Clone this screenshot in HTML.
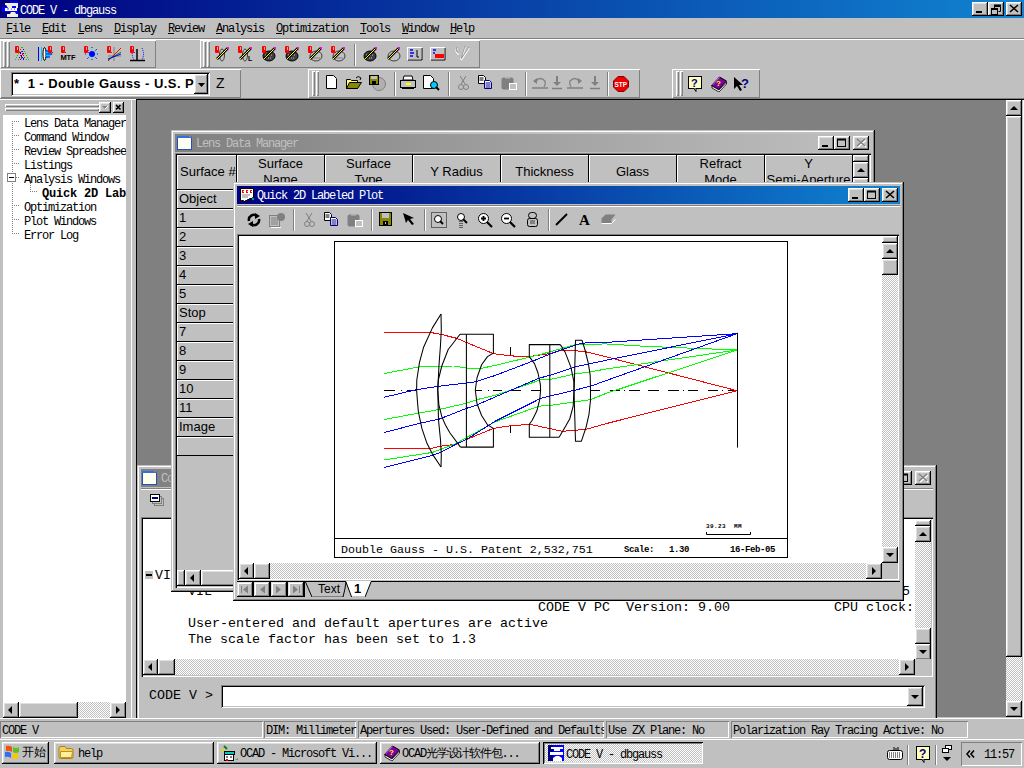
<!DOCTYPE html>
<html><head><meta charset="utf-8">
<style>
*{margin:0;padding:0;box-sizing:border-box}
html,body{width:1024px;height:768px;overflow:hidden;background:#c0c0c0;position:relative;color:#000}
body>div,body>svg{position:absolute}
.a{position:absolute}
.m{font-family:"Liberation Mono",monospace;font-size:12px;letter-spacing:-1.2px;white-space:pre;line-height:12px}
.c{font-family:"Liberation Mono",monospace;font-size:13.33px;white-space:pre;line-height:16px}
.s{font-family:"Liberation Sans",sans-serif;font-size:13px;white-space:pre;line-height:16px}
.btn{background:#c0c0c0;box-shadow:inset -1px -1px #000,inset 1px 1px #fff,inset -2px -2px #808080,inset 2px 2px #dfdfdf}
.btn2{background:#c0c0c0;box-shadow:inset -1px -1px #000,inset 1px 1px #dfdfdf,inset -2px -2px #808080,inset 2px 2px #fff}
.win{background:#c0c0c0;box-shadow:inset -1px -1px #000,inset 1px 1px #c0c0c0,inset -2px -2px #808080,inset 2px 2px #fff}
.sunk{box-shadow:inset 1px 1px #808080,inset -1px -1px #fff,inset 2px 2px #000,inset -2px -2px #c0c0c0}
.pane{box-shadow:inset 1px 1px #808080,inset -1px -1px #fff}
.etch{box-shadow:inset 1px 1px #fff,inset -1px -1px #808080}
.act{background:linear-gradient(to right,#000080,#1084d0)}
.inact{background:linear-gradient(to right,#808080,#c0c0c0)}
.dith{background:conic-gradient(#fff 25%,#c0c0c0 0 50%,#fff 0 75%,#c0c0c0 0) 0 0/2px 2px}
.hl{height:1px}
.vl{width:1px}

</style></head><body>
<!-- main title -->
<div class="act" style="left:0;top:0;width:1024px;height:18px"></div>
<svg style="left:2px;top:1px" width="16" height="16" viewBox="0 0 16 16">
<rect x="8" y="0" width="8" height="16" fill="#0000ff"/>
<rect x="0" y="6" width="16" height="5" fill="#0000ff"/>
<path d="M3 2h13v5h-2V5h-4v2H6L4 4H3z" fill="#f0f0d8"/>
<rect x="3" y="7" width="12" height="3" fill="#fff"/>
<path d="M5 8h2M9 8h1M12 8h1" stroke="#0000ff" stroke-width="0.8"/>
<path d="M9 11h4l1 2h2v3H5v-3h3z" fill="#f0f0d8"/>
</svg>
<div class="m" style="left:20px;top:5px;color:#fff">CODE V - dbgauss</div>
<div class="btn" style="left:972px;top:2px;width:16px;height:14px"></div>
<div style="left:976px;top:11px;width:6px;height:2px;background:#000"></div>
<div class="btn" style="left:988px;top:2px;width:16px;height:14px"></div>
<svg style="left:988px;top:2px" width="16" height="14"><path d="M6.5 4.5h6v5h-2M6.5 4.5v2" stroke="#000" fill="none"/><path d="M6 3.5h7" stroke="#000" stroke-width="2"/><rect x="3.5" y="7.5" width="6" height="5" stroke="#000" fill="none"/><path d="M3 7h7" stroke="#000" stroke-width="2"/></svg>
<div class="btn" style="left:1006px;top:2px;width:16px;height:14px"></div>
<svg style="left:1006px;top:2px" width="16" height="14"><path d="M4 3l8 7M12 3l-8 7" stroke="#000" stroke-width="1.6"/></svg>

<!-- menu -->
<div class="m" style="left:6px;top:23px">File  Edit  Lens  Display  Review  Analysis  Optimization  Tools  Window  Help</div>
<div class="hl" style="left:6px;top:33px;width:6px;background:#000"></div><div class="hl" style="left:42px;top:33px;width:6px;background:#000"></div><div class="hl" style="left:78px;top:33px;width:6px;background:#000"></div><div class="hl" style="left:114px;top:33px;width:6px;background:#000"></div><div class="hl" style="left:168px;top:33px;width:6px;background:#000"></div><div class="hl" style="left:216px;top:33px;width:6px;background:#000"></div><div class="hl" style="left:276px;top:33px;width:6px;background:#000"></div><div class="hl" style="left:360px;top:33px;width:6px;background:#000"></div><div class="hl" style="left:402px;top:33px;width:6px;background:#000"></div><div class="hl" style="left:450px;top:33px;width:6px;background:#000"></div>
<div class="hl" style="left:0;top:38px;width:1024px;background:#808080"></div>
<div class="hl" style="left:0;top:39px;width:1024px;background:#fff"></div>

<!-- toolbars -->
<div class="etch" style="left:0;top:40px;width:156px;height:28px"></div>
<div class="etch" style="left:200px;top:40px;width:280px;height:28px"></div>
<div class="etch" style="left:0;top:69px;width:241px;height:29px"></div>
<div class="etch" style="left:308px;top:69px;width:332px;height:29px"></div>
<div class="etch" style="left:640px;top:69px;width:0px;height:29px"></div>
<div class="etch" style="left:672px;top:69px;width:88px;height:29px"></div>
<div class="hl" style="left:0;top:98px;width:1024px;background:#808080"></div>

<!-- combo -->
<div class="sunk" style="left:11px;top:72px;width:199px;height:24px;background:#fff"></div>
<div class="s" style="left:14px;top:76px;font-size:13px;font-weight:bold;line-height:16px;letter-spacing:0.45px;width:180px;overflow:hidden">*  1 - Double Gauss - U.S. P</div>
<div class="btn" style="left:194px;top:74px;width:14px;height:20px"></div>
<svg style="left:194px;top:74px" width="14" height="20"><path d="M4 9h7l-3.5 4z" fill="#000"/></svg>
<div class="s" style="left:216px;top:75px;font-size:14px">Z</div>

<!-- left panel -->
<div class="hl" style="left:0;top:99px;width:136px;background:#fff"></div>
<div class="etch" style="left:5px;top:104px;width:94px;height:3px"></div>
<div class="etch" style="left:5px;top:108px;width:94px;height:3px"></div>
<div class="btn" style="left:99px;top:102px;width:12px;height:11px"></div>
<svg style="left:99px;top:102px" width="12" height="11"><path d="M3 4h6l-3 3z" fill="#808080"/><path d="M9 4l-3 3" stroke="#fff" stroke-width="1"/></svg>
<div class="btn" style="left:113px;top:102px;width:11px;height:11px"></div>
<svg style="left:113px;top:102px" width="11" height="11"><path d="M3 3l4.5 4.5M7.5 3L3 7.5" stroke="#000" stroke-width="1.6"/></svg>
<div style="left:3px;top:115px;width:123px;height:587px;background:#fff"></div>
<div class="vl" style="left:131px;top:99px;height:619px;background:#fff"></div>
<svg style="left:3px;top:115px" width="123" height="130">
<g fill="#808080">
<rect x="9" y="6" width="1" height="1"/>
</g>
<path d="M9.5 6v113" stroke="#808080" stroke-dasharray="1 1" />
<path d="M9 6.5h8M9 20.5h8M9 34.5h8M9 48.5h8M13 62.5h4M9 90.5h8M9 104.5h8M9 118.5h8M27 76.5h8" stroke="#808080" stroke-dasharray="1 1"/>
<path d="M27.5 66v10" stroke="#808080" stroke-dasharray="1 1"/>
<rect x="4.5" y="58.5" width="8" height="8" fill="#fff" stroke="#808080"/>
<path d="M6 62.5h5" stroke="#000"/>
</svg>
<div class="m" style="left:24px;top:117px;line-height:14px;width:102px;overflow:hidden">Lens Data Manager
Command Window
Review Spreadsheet
Listings
Analysis Windows

Optimization
Plot Windows
Error Log</div>
<div class="m" style="left:42px;top:188px;font-weight:bold;letter-spacing:-0.2px;width:84px;overflow:hidden">Quick 2D Labeled Plot</div>
<div style="left:126px;top:115px;width:5px;height:603px;background:#c0c0c0"></div>
<!-- tree hscroll -->
<div class="btn" style="left:3px;top:702px;width:16px;height:16px"></div>
<svg style="left:3px;top:702px" width="16" height="16"><path d="M9 4v8l-4-4z" fill="#000"/></svg>
<div class="btn" style="left:19px;top:702px;width:59px;height:16px"></div>
<div class="dith" style="left:78px;top:702px;width:33px;height:16px"></div>
<div class="btn" style="left:110px;top:702px;width:16px;height:16px"></div>
<svg style="left:110px;top:702px" width="16" height="16"><path d="M6 4v8l4-4z" fill="#000"/></svg>

<!-- MDI -->
<div style="left:136px;top:99px;width:888px;height:620px;background:#808080;box-shadow:inset 1px 1px #000,inset -1px -1px #fff,inset -2px -2px #c0c0c0"></div>
<!-- MDI vscroll -->
<div class="btn" style="left:1006px;top:100px;width:16px;height:16px"></div>
<svg style="left:1006px;top:100px" width="16" height="16"><path d="M4 10h8l-4-4z" fill="#000"/></svg>
<div class="btn" style="left:1006px;top:116px;width:16px;height:541px"></div>
<div class="dith" style="left:1006px;top:657px;width:16px;height:44px"></div>
<div class="btn" style="left:1006px;top:701px;width:16px;height:16px"></div>
<svg style="left:1006px;top:701px" width="16" height="16"><path d="M4 6h8l-4 4z" fill="#000"/></svg>

<div class="win" style="left:137px;top:465px;width:800px;height:262px"></div>
<div class="inact" style="left:141px;top:469px;width:792px;height:18px"></div>
<svg style="left:142px;top:471px" width="15" height="14"><rect x="0.5" y="0.5" width="14" height="13" fill="#fffff0" stroke="#2050c0"/><rect x="0" y="0" width="15" height="2" fill="#3070e0"/><rect x="12" y="0" width="2" height="1" fill="#ff6030"/></svg>
<div class="m" style="left:161px;top:473px;color:#c0c0c0">Command Window</div>
<div class="btn" style="left:880px;top:471px;width:16px;height:14px"></div>
<div class="btn" style="left:896px;top:471px;width:16px;height:14px"></div>
<div class="btn" style="left:915px;top:471px;width:16px;height:14px"></div>
<svg style="left:896px;top:471px" width="16" height="14"><rect x="3.5" y="3.5" width="8" height="7" fill="none" stroke="#000"/><path d="M3 3.5h9" stroke="#000" stroke-width="2"/></svg>
<svg style="left:915px;top:471px" width="16" height="14"><path d="M4 3l8 7M12 3l-8 7" stroke="#fff" stroke-width="1.6" transform="translate(1,1)"/><path d="M4 3l8 7M12 3l-8 7" stroke="#808080" stroke-width="1.6"/></svg>
<div class="hl" style="left:141px;top:488px;width:792px;background:#808080"></div>
<div class="hl" style="left:141px;top:489px;width:792px;background:#fff"></div>
<svg style="left:150px;top:494px" width="18" height="16">
<rect x="4.5" y="4.5" width="9" height="7" fill="#c0c0c0" stroke="#808080"/>
<rect x="2.5" y="2.5" width="9" height="7" fill="#c0c0c0" stroke="#808080"/>
<rect x="0.5" y="0.5" width="9" height="7" fill="#fff" stroke="#000"/>
<rect x="2" y="3" width="6" height="2" fill="#000080"/>
</svg>
<div style="left:141px;top:517px;width:792px;height:160px;background:#fff;box-shadow:inset 1px 1px #808080,inset 2px 2px #000,inset -1px -1px #fff,inset -2px -2px #c0c0c0"></div>
<div style="left:145px;top:571px;width:8px;height:8px;background:#c0c0c0"></div><div style="left:146px;top:574px;width:6px;height:2px;background:#000"></div>
<div class="c" style="left:155px;top:568px">VI</div>
<div class="c" style="left:188px;top:584px">VIL</div>
<div class="c" style="left:538px;top:600px">CODE V PC  Version: 9.00</div>
<div class="c" style="left:834px;top:600px">CPU clock:</div>
<div class="c" style="left:902px;top:584px">5</div>
<div class="c" style="left:188px;top:616px">User-entered and default apertures are active
The scale factor has been set to 1.3</div>
<div class="btn" style="left:915px;top:520px;width:16px;height:6px"></div>
<div class="dith" style="left:915px;top:526px;width:16px;height:133px"></div>
<div class="btn" style="left:915px;top:526px;width:16px;height:16px"></div>
<svg style="left:915px;top:526px" width="16" height="16"><path d="M4 10h8l-4-4z" fill="#000"/></svg>
<div class="btn" style="left:915px;top:628px;width:16px;height:16px"></div>
<div class="btn" style="left:915px;top:644px;width:16px;height:16px"></div>
<svg style="left:915px;top:644px" width="16" height="16"><path d="M4 6h8l-4 4z" fill="#000"/></svg>
<div class="dith" style="left:143px;top:659px;width:772px;height:16px"></div>
<div class="btn" style="left:143px;top:659px;width:15px;height:16px"></div>
<svg style="left:143px;top:659px" width="15" height="16"><path d="M9 4v8l-4-4z" fill="#000"/></svg>
<div class="btn" style="left:158px;top:659px;width:17px;height:16px"></div>
<div class="btn" style="left:899px;top:659px;width:16px;height:16px"></div>
<svg style="left:899px;top:659px" width="16" height="16"><path d="M6 4v8l4-4z" fill="#000"/></svg>
<div style="left:915px;top:659px;width:16px;height:16px;background:#c0c0c0"></div>
<div class="c" style="left:149px;top:688px">CODE V &gt;</div>
<div class="sunk" style="left:221px;top:685px;width:704px;height:23px;background:#fff"></div>
<div class="btn" style="left:907px;top:687px;width:16px;height:19px"></div>
<svg style="left:907px;top:687px" width="16" height="19"><path d="M4 8h8l-4 4z" fill="#000"/></svg>
<div class="win" style="left:171px;top:130px;width:704px;height:462px"></div>
<div class="inact" style="left:175px;top:134px;width:696px;height:18px"></div>
<svg style="left:177px;top:136px" width="15" height="14"><rect x="0.5" y="0.5" width="14" height="13" fill="#fffff0" stroke="#2050c0"/><rect x="0" y="0" width="15" height="2" fill="#3070e0"/><rect x="12" y="0" width="2" height="1" fill="#ff6030"/></svg>
<div class="m" style="left:196px;top:138px;color:#c0c0c0">Lens Data Manager</div>
<div class="btn" style="left:818px;top:136px;width:16px;height:14px"></div>
<div class="btn" style="left:834px;top:136px;width:16px;height:14px"></div>
<div class="btn" style="left:853px;top:136px;width:16px;height:14px"></div>
<div style="left:822px;top:145px;width:6px;height:2px;background:#000"></div>
<svg style="left:834px;top:136px" width="16" height="14"><rect x="3.5" y="3.5" width="8" height="7" fill="none" stroke="#000"/><path d="M3 3.5h9" stroke="#000" stroke-width="2"/></svg>
<svg style="left:853px;top:136px" width="16" height="14"><path d="M4 3l8 7M12 3l-8 7" stroke="#fff" stroke-width="1.6" transform="translate(1,1)"/><path d="M4 3l8 7M12 3l-8 7" stroke="#808080" stroke-width="1.6"/></svg>
<div style="left:175px;top:153px;width:696px;height:435px;background:#c0c0c0;box-shadow:inset 1px 1px #808080,inset 2px 2px #000,inset -1px -1px #fff"></div>
<div style="left:176px;top:154px;width:677px;height:302px;background:#000"></div><div style="left:176px;top:456px;width:1px;height:114px;background:#000"></div>
<div style="left:177px;top:155px;width:59px;height:34px;background:#c0c0c0;box-shadow:inset 1px 1px #fff"></div>
<div class="s" style="left:180px;top:164px;width:56px;overflow:hidden">Surface #</div>
<div style="left:237px;top:155px;width:87px;height:34px;background:#c0c0c0;box-shadow:inset 1px 1px #fff"></div>
<div class="s" style="left:237px;top:156px;width:87px;height:33px;overflow:hidden;text-align:center;line-height:16px">Surface
Name</div>
<div style="left:325px;top:155px;width:87px;height:34px;background:#c0c0c0;box-shadow:inset 1px 1px #fff"></div>
<div class="s" style="left:325px;top:156px;width:87px;height:33px;overflow:hidden;text-align:center;line-height:16px">Surface
Type</div>
<div style="left:413px;top:155px;width:87px;height:34px;background:#c0c0c0;box-shadow:inset 1px 1px #fff"></div>
<div class="s" style="left:413px;top:164px;width:87px;text-align:center">Y Radius</div>
<div style="left:501px;top:155px;width:87px;height:34px;background:#c0c0c0;box-shadow:inset 1px 1px #fff"></div>
<div class="s" style="left:501px;top:164px;width:87px;text-align:center">Thickness</div>
<div style="left:589px;top:155px;width:87px;height:34px;background:#c0c0c0;box-shadow:inset 1px 1px #fff"></div>
<div class="s" style="left:589px;top:164px;width:87px;text-align:center">Glass</div>
<div style="left:677px;top:155px;width:87px;height:34px;background:#c0c0c0;box-shadow:inset 1px 1px #fff"></div>
<div class="s" style="left:677px;top:156px;width:87px;height:33px;overflow:hidden;text-align:center;line-height:16px">Refract
Mode</div>
<div style="left:765px;top:155px;width:87px;height:34px;background:#c0c0c0;box-shadow:inset 1px 1px #fff"></div>
<div class="s" style="left:765px;top:156px;width:87px;height:33px;overflow:hidden;text-align:center;line-height:16px">Y
Semi-Aperture</div>
<div style="left:177px;top:190px;width:59px;height:18px;background:#c0c0c0;box-shadow:inset 1px 1px #fff"></div>
<div class="s" style="left:179px;top:191px">Object</div>
<div style="left:177px;top:209px;width:59px;height:18px;background:#c0c0c0;box-shadow:inset 1px 1px #fff"></div>
<div class="s" style="left:179px;top:210px">1</div>
<div style="left:177px;top:228px;width:59px;height:18px;background:#c0c0c0;box-shadow:inset 1px 1px #fff"></div>
<div class="s" style="left:179px;top:229px">2</div>
<div style="left:177px;top:247px;width:59px;height:18px;background:#c0c0c0;box-shadow:inset 1px 1px #fff"></div>
<div class="s" style="left:179px;top:248px">3</div>
<div style="left:177px;top:266px;width:59px;height:18px;background:#c0c0c0;box-shadow:inset 1px 1px #fff"></div>
<div class="s" style="left:179px;top:267px">4</div>
<div style="left:177px;top:285px;width:59px;height:18px;background:#c0c0c0;box-shadow:inset 1px 1px #fff"></div>
<div class="s" style="left:179px;top:286px">5</div>
<div style="left:177px;top:304px;width:59px;height:18px;background:#c0c0c0;box-shadow:inset 1px 1px #fff"></div>
<div class="s" style="left:179px;top:305px">Stop</div>
<div style="left:177px;top:323px;width:59px;height:18px;background:#c0c0c0;box-shadow:inset 1px 1px #fff"></div>
<div class="s" style="left:179px;top:324px">7</div>
<div style="left:177px;top:342px;width:59px;height:18px;background:#c0c0c0;box-shadow:inset 1px 1px #fff"></div>
<div class="s" style="left:179px;top:343px">8</div>
<div style="left:177px;top:361px;width:59px;height:18px;background:#c0c0c0;box-shadow:inset 1px 1px #fff"></div>
<div class="s" style="left:179px;top:362px">9</div>
<div style="left:177px;top:380px;width:59px;height:18px;background:#c0c0c0;box-shadow:inset 1px 1px #fff"></div>
<div class="s" style="left:179px;top:381px">10</div>
<div style="left:177px;top:399px;width:59px;height:18px;background:#c0c0c0;box-shadow:inset 1px 1px #fff"></div>
<div class="s" style="left:179px;top:400px">11</div>
<div style="left:177px;top:418px;width:59px;height:18px;background:#c0c0c0;box-shadow:inset 1px 1px #fff"></div>
<div class="s" style="left:179px;top:419px">Image</div>
<div style="left:177px;top:437px;width:59px;height:18px;background:#c0c0c0;box-shadow:inset 1px 1px #fff"></div>

<div class="btn" style="left:853px;top:155px;width:16px;height:7px"></div>
<div class="btn" style="left:853px;top:162px;width:16px;height:16px"></div>
<svg style="left:853px;top:162px" width="16" height="16"><path d="M4 10h8l-4-4z" fill="#000"/></svg>
<div class="btn" style="left:853px;top:178px;width:16px;height:392px"></div>
<div style="left:177px;top:570px;width:692px;height:16px;background:#c0c0c0"></div>
<div class="btn" style="left:177px;top:570px;width:8px;height:16px"></div>
<div class="btn" style="left:185px;top:570px;width:16px;height:16px"></div>
<svg style="left:185px;top:570px" width="16" height="16"><path d="M9 4v8l-4-4z" fill="#000"/></svg>
<div class="btn" style="left:201px;top:570px;width:40px;height:16px"></div>
<div class="win" style="left:233px;top:182px;width:671px;height:419px"></div>
<div class="act" style="left:237px;top:186px;width:663px;height:18px"></div>
<svg style="left:239px;top:187px" width="16" height="16" viewBox="0 0 16 16">
<path d="M1.5 1.5h13v9h-1v1h-3v1h-2v1h-2v1h-2v-1h-2v1h-1z" fill="#fff" stroke="#000"/>
<path d="M3 3h2v3H3zM7 3h2v3H7zM11 3h2v3h-2z" fill="#ff0000"/>
<path d="M4 4h0.8v1H4zM8 4h0.8v1H8zM12 4h1v1h-1z" fill="#fff"/>
<path d="M3 8h8M3 10h6" stroke="#808080"/>
<rect x="13" y="11" width="2" height="2" fill="#00a080"/>
</svg>
<div class="m" style="left:257px;top:190px;color:#fff">Quick 2D Labeled Plot</div>
<div class="btn" style="left:848px;top:188px;width:16px;height:14px"></div>
<div class="btn" style="left:864px;top:188px;width:16px;height:14px"></div>
<div class="btn" style="left:882px;top:188px;width:16px;height:14px"></div>
<div style="left:852px;top:197px;width:6px;height:2px;background:#000"></div>
<svg style="left:864px;top:188px" width="16" height="14"><rect x="3.5" y="3.5" width="8" height="7" fill="none" stroke="#000"/><path d="M3 3.5h9" stroke="#000" stroke-width="2"/></svg>
<svg style="left:882px;top:188px" width="16" height="14"><path d="M4 3l8 7M12 3l-8 7" stroke="#000" stroke-width="1.6"/></svg>
<div class="hl" style="left:237px;top:205px;width:663px;background:#808080"></div>
<div class="hl" style="left:237px;top:206px;width:663px;background:#fff"></div>
<div style="left:237px;top:234px;width:662px;height:346px;background:#fff;box-shadow:inset 1px 1px #808080,inset 2px 2px #000,inset -1px -1px #fff,inset -2px -2px #c0c0c0"></div>
<div class="btn" style="left:882px;top:236px;width:16px;height:7px"></div>
<div class="dith" style="left:882px;top:243px;width:16px;height:304px"></div>
<div class="btn" style="left:882px;top:243px;width:16px;height:16px"></div>
<svg style="left:882px;top:243px" width="16" height="16"><path d="M4 10h8l-4-4z" fill="#000"/></svg>
<div class="btn" style="left:882px;top:259px;width:16px;height:16px"></div>
<div class="btn" style="left:882px;top:547px;width:16px;height:16px"></div>
<svg style="left:882px;top:547px" width="16" height="16"><path d="M4 6h8l-4 4z" fill="#000"/></svg>
<div class="dith" style="left:239px;top:563px;width:643px;height:16px"></div>
<div class="btn" style="left:239px;top:563px;width:15px;height:16px"></div>
<svg style="left:239px;top:563px" width="15" height="16"><path d="M9 4v8l-4-4z" fill="#000"/></svg>
<div class="btn" style="left:254px;top:563px;width:16px;height:16px"></div>
<div class="btn" style="left:866px;top:563px;width:16px;height:16px"></div>
<svg style="left:866px;top:563px" width="16" height="16"><path d="M6 4v8l4-4z" fill="#000"/></svg>
<div style="left:882px;top:563px;width:16px;height:16px;background:#c0c0c0"></div>
<div class="hl" style="left:237px;top:581px;width:663px;background:#000"></div>
<div class="btn2" style="left:237px;top:582px;width:16px;height:15px"></div>
<div class="vl" style="left:253px;top:582px;height:15px;background:#000"></div>
<div class="btn2" style="left:254px;top:582px;width:16px;height:15px"></div>
<div class="vl" style="left:270px;top:582px;height:15px;background:#000"></div>
<div class="btn2" style="left:271px;top:582px;width:16px;height:15px"></div>
<div class="vl" style="left:287px;top:582px;height:15px;background:#000"></div>
<div class="btn2" style="left:288px;top:582px;width:16px;height:15px"></div>
<div class="vl" style="left:304px;top:582px;height:15px;background:#000"></div>
<svg style="left:237px;top:582px" width="68" height="15">
<g fill="#808080">
<rect x="4" y="4" width="1" height="7"/><path d="M11 3.5v8l-5-4z"/>
<path d="M28 3.5v8l-5-4z"/>
<path d="M39 3.5v8l5-4z"/>
<path d="M56 3.5v8l5-4z"/><rect x="62" y="4" width="1" height="7"/>
</g></svg>
<svg style="left:304px;top:581px" width="596" height="17">
<path d="M0 0.5H42M67 0.5H596" stroke="#000"/>
<path d="M1.5 1l6.2 15H39l3-15" fill="#c0c0c0" stroke="none"/>
<path d="M1.5 1l6.5 15" stroke="#000" fill="none"/>
<path d="M8 15.5H39" stroke="#808080"/>
<path d="M42 1q-1 8-3 15" stroke="#000" fill="none"/>
<path d="M42 0l5.5 16h13.5l6-16z" fill="#fff"/>
<path d="M42 1l5.6 15M61 16l6-15" stroke="#000" fill="none"/>
<path d="M48 15.5H61" stroke="#c0c0c0"/>
</svg>
<div class="s" style="left:318px;top:581px;font-size:12px">Text</div>
<div class="s" style="left:354px;top:581px;font-size:13px;font-weight:bold">1</div>
<svg style="left:334px;top:241px" width="454" height="318" viewBox="334 241 454 318">
<rect x="334.5" y="241.5" width="453" height="316" fill="none" stroke="#000"/>
<path d="M334 538.5H787" stroke="#000"/>
<path shape-rendering="crispEdges" d="M384 390.5H395M401 390.5H402M407 390.5H416M476 390.5H482M488 390.5H489M493 390.5H502M509 390.5H521M531 390.5H541M591 390.5H600M610 390.5H620M624 390.5H625M629 390.5H640M648 390.5H659M668 390.5H679M683 390.5H684M688 390.5H698M708 390.5H718M722 390.5H723M728 390.5H737" stroke="#000" fill="none"/><g fill="none" stroke-width="1" stroke-linejoin="round" shape-rendering="crispEdges">
<path d="M384.0 332.5 L430.7 332.5 L441.2 334.4 L457.0 338.4 L466.4 342.5 L493.4 353.6 L506.4 355.4 L520.5 356.6 L529.3 356.6 L549.8 353.6 L562.7 350.1 L569.7 350.1 L586.1 351.9 L605.0 356.5 L737.0 390.7" stroke="#ff0000"/>
<path d="M384.0 448.3 L431.3 448.3 L441.8 446.0 L457.0 444.2 L466.4 439.5 L493.4 428.4 L508.8 426.0 L529.8 424.3 L548.6 428.4 L562.7 431.3 L576.7 430.1 L587.3 429.0 L605.0 423.9 L737.0 390.7" stroke="#ff0000"/>
<path d="M384.0 373.6 L417.8 367.1 L429.0 366.2 L453.5 366.0 L473.4 368.9 L481.6 368.3 L495.0 365.4 L529.3 357.2 L549.8 351.9 L574.4 344.8 L595.5 344.3 L605.0 343.9 L647.0 346.4 L737.0 350.0" stroke="#00ff00"/>
<path d="M384.0 419.6 L418.4 413.1 L438.9 409.6 L466.4 403.2 L477.0 399.6 L495.0 395.3 L540.4 380.0 L549.8 379.5 L574.4 374.1 L590.5 371.8 L605.0 369.2 L737.0 350.0" stroke="#00ff00"/>
<path d="M384.0 460.0 L432.4 452.4 L441.8 448.9 L455.9 443.6 L466.4 437.7 L495.0 421.9 L539.2 406.1 L549.8 405.5 L574.4 402.0 L590.5 399.6 L605.0 393.8 L737.0 350.0" stroke="#00ff00"/>
<path d="M384.0 397.3 L416.0 389.7 L437.1 386.5 L475.8 381.8 L495.0 375.5 L532.2 361.3 L549.8 354.2 L560.3 350.1 L581.4 343.1 L605.0 342.5 L737.0 333.7" stroke="#0000ff"/>
<path d="M384.0 432.5 L420.7 423.1 L439.5 419.0 L466.4 408.4 L477.0 404.9 L495.0 397.0 L539.2 378.2 L549.8 375.3 L574.4 367.1 L590.5 363.6 L605.0 360.5 L737.0 333.7" stroke="#0000ff"/>
<path d="M384.0 467.6 L432.4 455.3 L440.6 452.4 L455.9 444.2 L466.4 439.5 L495.0 421.3 L540.4 398.5 L549.8 396.1 L574.4 390.3 L590.5 386.2 L605.0 381.0 L737.0 333.7" stroke="#0000ff"/>
</g><g fill="none" stroke-width="1.05" stroke-linejoin="round"><path d="M441.0 314.0 L432.4 327.9 L423.6 347.2 L419.5 362.4 L416.8 380.0 L416.6 390.0 L417.5 402.0 L418.4 412.0 L421.9 428.4 L426.6 442.4 L432.4 454.1 L441.0 467.0" stroke="#000"/>
<path d="M441.0 314.0 L441.3 330.0 L440.5 345.0 L439.0 365.0 L437.8 390.0 L438.5 420.0 L440.5 440.0 L441.3 455.0 L441.0 467.0" stroke="#000"/>
<path d="M460.0 334.3 L448.2 349.5 L441.8 366.0 L438.3 380.0 L437.7 390.0 L438.9 404.9 L441.8 416.6 L445.3 424.8 L450.0 433.0 L460.5 447.1" stroke="#000"/>
<path d="M460.0 334.3 L493.4 334.3 L493.4 353.0 L487.5 356.6 L481.6 364.8 L477.0 377.7 L475.3 390.0 L477.0 403.8 L481.6 415.5 L487.5 424.8 L493.4 428.4 L493.4 447.1 L460.5 447.1" stroke="#000"/>
<path d="M466.4 334.3 L466.4 447.1" stroke="#000"/>
<path d="M560.3 344.6 L529.3 344.6 L529.3 356.6 L534.5 363.6 L538.0 373.0 L540.4 384.7 L540.6 390.0 L539.8 399.1 L536.9 410.8 L532.2 420.2 L529.3 424.3 L529.3 437.2 L559.1 437.2" stroke="#000"/>
<path d="M560.3 344.6 L565.0 351.9 L570.9 367.1 L573.8 381.2 L574.0 390.0 L573.2 406.1 L569.7 419.0 L565.0 427.2 L559.1 437.2" stroke="#000"/>
<path d="M549.8 344.6 L549.8 437.2" stroke="#000"/>
<path d="M582.0 340.2 L575.5 340.2 L574.4 382.3 L574.0 390.0 L574.4 404.3 L575.5 441.2 L581.4 441.2 L586.1 427.2 L589.0 414.3 L590.5 400.2 L590.5 390.0 L590.2 375.3 L588.4 363.6 L584.9 349.5 L582.0 340.2" stroke="#000"/>
<path d="M737.5 332.8 L737.5 447.6" stroke="#000"/>
<path d="M510.5 347.0 L510.5 355.0" stroke="#000"/>
<path d="M510.5 426.0 L510.5 433.0" stroke="#000"/>
</g>
<path d="M706.5 532v2.5h44v-2.5" stroke="#000" fill="none"/>
</svg>
<div class="c" style="left:341px;top:543px;font-size:11.67px;line-height:14px">Double Gauss - U.S. Patent 2,532,751</div>
<div class="m" style="left:624px;top:544px;font-size:9px;letter-spacing:-0.4px;font-weight:bold;line-height:12px">Scale:</div>
<div class="m" style="left:669px;top:544px;font-size:9px;letter-spacing:-0.4px;font-weight:bold;line-height:12px">1.30</div>
<div class="m" style="left:730px;top:544px;font-size:9px;letter-spacing:-0.4px;font-weight:bold;line-height:12px">16-Feb-05</div>
<div class="m" style="left:706px;top:523px;font-size:6px;letter-spacing:0.4px;font-weight:bold;line-height:8px">39.23  MM</div>
<div style="left:3px;top:41px;width:3px;height:26px;box-shadow:inset 1px 1px #fff,inset -1px -1px #808080"></div>
<div style="left:7px;top:41px;width:3px;height:26px;box-shadow:inset 1px 1px #fff,inset -1px -1px #808080"></div>
<svg style="left:14px;top:46px" width="17" height="16" viewBox="0 0 17 16"><path d="M1.5 0.5h3v6h-3z" fill="none" stroke="#f00"/><rect x="2" y="1" width="1" height="5" fill="#f00"/><rect x="3" y="4" width="1" height="2" fill="#f00"/><rect x="5" y="6" width="1" height="1" fill="#f00"/><rect x="7" y="1" width="1" height="1" fill="#0c0"/><rect x="8" y="1" width="1" height="1" fill="#0c0"/><rect x="6" y="3" width="1" height="1" fill="#f00"/><rect x="9" y="3" width="1" height="1" fill="#00f"/><rect x="5" y="5" width="1" height="1" fill="#0c0"/><rect x="7" y="5" width="1" height="1" fill="#f00"/><rect x="8" y="5" width="1" height="1" fill="#00f"/><rect x="10" y="5" width="1" height="1" fill="#0c0"/><rect x="4" y="7" width="1" height="1" fill="#0c0"/><rect x="6" y="7" width="1" height="1" fill="#00f"/><rect x="8" y="7" width="1" height="1" fill="#f00"/><rect x="9" y="7" width="1" height="1" fill="#00f"/><rect x="11" y="7" width="1" height="1" fill="#0c0"/><rect x="3" y="9" width="1" height="1" fill="#0c0"/><rect x="6" y="9" width="1" height="1" fill="#f00"/><rect x="7" y="9" width="1" height="1" fill="#00f"/><rect x="9" y="9" width="1" height="1" fill="#f00"/><rect x="12" y="9" width="1" height="1" fill="#0c0"/><rect x="2" y="11" width="1" height="1" fill="#0c0"/><rect x="5" y="11" width="1" height="1" fill="#00f"/><rect x="7" y="11" width="1" height="1" fill="#f00"/><rect x="8" y="11" width="1" height="1" fill="#00f"/><rect x="10" y="11" width="1" height="1" fill="#f00"/><rect x="13" y="11" width="1" height="1" fill="#0c0"/><rect x="1" y="13" width="1" height="1" fill="#0c0"/><rect x="4" y="13" width="1" height="1" fill="#0c0"/><rect x="6" y="13" width="1" height="1" fill="#00f"/><rect x="9" y="13" width="1" height="1" fill="#00f"/><rect x="12" y="13" width="1" height="1" fill="#0c0"/><rect x="14" y="13" width="1" height="1" fill="#0c0"/><rect x="7" y="10" width="1" height="1" fill="#00f"/><rect x="6" y="6" width="1" height="1" fill="#00f"/><rect x="8" y="8" width="1" height="1" fill="#f00"/><rect x="7" y="12" width="1" height="1" fill="#f00"/><rect x="9" y="12" width="1" height="1" fill="#00f"/></svg>
<svg style="left:37px;top:46px" width="17" height="16" viewBox="0 0 17 16"><path d="M1 1 l1 1 l-1 1 l1 1 l-1 1 l1 1 l-1 1 l1 1 l-1 1 l1 1 l-1 1 l1 1 l-1 1 l1 1 l-1 1" stroke="#00f" fill="none"/><path d="M4 1 l1 1 l-1 1 l1 1 l-1 1 l1 1 l-1 1 l1 1 l-1 1 l1 1 l-1 1 l1 1 l-1 1 l1 1 l-1 1" stroke="#0cf" fill="none"/><ellipse cx="7.5" cy="8" rx="1.5" ry="6.5" fill="#fff" stroke="#000"/><path d="M9 3l7 5l-7 5z" fill="#0cf"/><path d="M9 5h4M9 8h6M9 11h4" stroke="#00f"/><g transform="translate(10,0)"><path d="M1.5 0.5h3v6h-3z" fill="none" stroke="#f00"/><rect x="2" y="1" width="1" height="5" fill="#f00"/><rect x="3" y="4" width="1" height="2" fill="#f00"/><rect x="5" y="6" width="1" height="1" fill="#f00"/></g></svg>
<svg style="left:60px;top:46px" width="17" height="16" viewBox="0 0 17 16"><path d="M1.5 0.5h3v6h-3z" fill="none" stroke="#f00"/><rect x="2" y="1" width="1" height="5" fill="#f00"/><rect x="3" y="4" width="1" height="2" fill="#f00"/><rect x="5" y="6" width="1" height="1" fill="#f00"/><text x="0.5" y="14" font-family="Liberation Sans" font-weight="bold" font-size="7.5" fill="#000" textLength="15">MTF</text></svg>
<svg style="left:83px;top:46px" width="17" height="16" viewBox="0 0 17 16"><circle cx="9" cy="8" r="3" fill="#00f"/><path d="M9 1v2M9 13v2M2 8h2M14 8h2M4 3l2 2M14 3l-2 2M4 13l2-2M14 13l-2-2" stroke="#00f" stroke-dasharray="1 1"/><path d="M9 3v2M9 11v2M4 8h2M12 8h2" stroke="#0ff"/><path d="M1.5 0.5h3v6h-3z" fill="none" stroke="#f00"/><rect x="2" y="1" width="1" height="5" fill="#f00"/><rect x="3" y="4" width="1" height="2" fill="#f00"/><rect x="5" y="6" width="1" height="1" fill="#f00"/></svg>
<svg style="left:106px;top:46px" width="17" height="16" viewBox="0 0 17 16"><path d="M8 1v14M2 10h13" stroke="#808080"/><path d="M2 15L15 2" stroke="#f00"/><path d="M2 14l13-8" stroke="#080"/><path d="M2 13l13-5" stroke="#00f"/><path d="M1.5 0.5h3v6h-3z" fill="none" stroke="#f00"/><rect x="2" y="1" width="1" height="5" fill="#f00"/><rect x="3" y="4" width="1" height="2" fill="#f00"/><rect x="5" y="6" width="1" height="1" fill="#f00"/></svg>
<svg style="left:129px;top:46px" width="17" height="16" viewBox="0 0 17 16"><path d="M4 3q-2 6 1 11M13 2q3 6 0 12" stroke="#00f" stroke-dasharray="1 1" fill="none"/><path d="M8 3v11" stroke="#000" stroke-width="1.5"/><path d="M1 14.5h15" stroke="#000" stroke-width="1.5"/><path d="M1.5 0.5h3v6h-3z" fill="none" stroke="#f00"/><rect x="2" y="1" width="1" height="5" fill="#f00"/><rect x="3" y="4" width="1" height="2" fill="#f00"/><rect x="5" y="6" width="1" height="1" fill="#f00"/></svg>
<div style="left:203px;top:41px;width:3px;height:26px;box-shadow:inset 1px 1px #fff,inset -1px -1px #808080"></div>
<div style="left:207px;top:41px;width:3px;height:26px;box-shadow:inset 1px 1px #fff,inset -1px -1px #808080"></div>
<svg style="left:214px;top:46px" width="17" height="16" viewBox="0 0 17 16"><ellipse cx="8" cy="9" rx="2.5" ry="6" fill="#c0c0c0" stroke="#404040"/><path d="M3 13L14 2" stroke="#000" stroke-width="2.5"/><path d="M3 13L14 2" stroke="#ff0" stroke-width="1"/><rect x="13" y="1" width="2" height="2" fill="#f0f"/><path d="M1.5 0.5h3v6h-3z" fill="none" stroke="#f00"/><rect x="2" y="1" width="1" height="5" fill="#f00"/><rect x="3" y="4" width="1" height="2" fill="#f00"/><rect x="5" y="6" width="1" height="1" fill="#f00"/></svg>
<svg style="left:237px;top:46px" width="17" height="16" viewBox="0 0 17 16"><ellipse cx="8" cy="9" rx="2.5" ry="6" fill="#c0c0c0" stroke="#404040"/><path d="M3 13L14 2" stroke="#000" stroke-width="2.5"/><path d="M3 13L14 2" stroke="#ff0" stroke-width="1"/><rect x="13" y="1" width="2" height="2" fill="#f0f"/><path d="M1.5 0.5h3v6h-3z" fill="none" stroke="#f00"/><rect x="2" y="1" width="1" height="5" fill="#f00"/><rect x="3" y="4" width="1" height="2" fill="#f00"/><rect x="5" y="6" width="1" height="1" fill="#f00"/><text x="11" y="15" font-family="Liberation Sans" font-size="7" font-weight="bold">L</text></svg>
<svg style="left:261px;top:46px" width="17" height="16" viewBox="0 0 17 16"><ellipse cx="8" cy="10" rx="6" ry="5" fill="#404040" stroke="#000"/><path d="M4 9h8M5 12h6" stroke="#c0c0c0" stroke-dasharray="1 1"/><path d="M3 13L14 2" stroke="#000" stroke-width="2.5"/><path d="M3 13L14 2" stroke="#ff0" stroke-width="1"/><rect x="13" y="1" width="2" height="2" fill="#f0f"/><path d="M1.5 0.5h3v6h-3z" fill="none" stroke="#f00"/><rect x="2" y="1" width="1" height="5" fill="#f00"/><rect x="3" y="4" width="1" height="2" fill="#f00"/><rect x="5" y="6" width="1" height="1" fill="#f00"/></svg>
<svg style="left:284px;top:46px" width="17" height="16" viewBox="0 0 17 16"><ellipse cx="8" cy="10" rx="6" ry="5" fill="#404040" stroke="#000"/><path d="M4 9h8M5 12h6" stroke="#c0c0c0" stroke-dasharray="1 1"/><path d="M3 13L14 2" stroke="#000" stroke-width="2.5"/><path d="M3 13L14 2" stroke="#ff0" stroke-width="1"/><rect x="13" y="1" width="2" height="2" fill="#f0f"/><path d="M1.5 0.5h3v6h-3z" fill="none" stroke="#f00"/><rect x="2" y="1" width="1" height="5" fill="#f00"/><rect x="3" y="4" width="1" height="2" fill="#f00"/><rect x="5" y="6" width="1" height="1" fill="#f00"/></svg>
<svg style="left:307px;top:46px" width="17" height="16" viewBox="0 0 17 16"><ellipse cx="9" cy="10" rx="6" ry="5" fill="#c0c0c0" stroke="#404040"/><path d="M5 12h8" stroke="#808080"/><path d="M3 13L14 2" stroke="#000" stroke-width="2.5"/><path d="M3 13L14 2" stroke="#ff0" stroke-width="1"/><rect x="13" y="1" width="2" height="2" fill="#f0f"/><path d="M1.5 0.5h3v6h-3z" fill="none" stroke="#f00"/><rect x="2" y="1" width="1" height="5" fill="#f00"/><rect x="3" y="4" width="1" height="2" fill="#f00"/><rect x="5" y="6" width="1" height="1" fill="#f00"/></svg>
<svg style="left:330px;top:46px" width="17" height="16" viewBox="0 0 17 16"><ellipse cx="9" cy="10" rx="6" ry="5" fill="#c0c0c0" stroke="#404040"/><path d="M5 12h8" stroke="#808080"/><path d="M3 13L14 2" stroke="#000" stroke-width="2.5"/><path d="M3 13L14 2" stroke="#ff0" stroke-width="1"/><rect x="13" y="1" width="2" height="2" fill="#f0f"/><path d="M1.5 0.5h3v6h-3z" fill="none" stroke="#f00"/><rect x="2" y="1" width="1" height="5" fill="#f00"/><rect x="3" y="4" width="1" height="2" fill="#f00"/><rect x="5" y="6" width="1" height="1" fill="#f00"/></svg>
<div style="left:354px;top:44px;width:1px;height:22px;background:#808080"></div><div style="left:355px;top:44px;width:1px;height:22px;background:#fff"></div>
<svg style="left:362px;top:46px" width="17" height="16" viewBox="0 0 17 16"><ellipse cx="8" cy="10" rx="6" ry="5" fill="#404040" stroke="#000"/><path d="M4 9h8M5 12h6" stroke="#c0c0c0" stroke-dasharray="1 1"/><path d="M3 13L14 2" stroke="#000" stroke-width="2.5"/><path d="M3 13L14 2" stroke="#ff0" stroke-width="1"/><rect x="13" y="1" width="2" height="2" fill="#f0f"/></svg>
<svg style="left:385px;top:46px" width="17" height="16" viewBox="0 0 17 16"><ellipse cx="9" cy="10" rx="6" ry="5" fill="#c0c0c0" stroke="#404040"/><path d="M3 13L14 2" stroke="#000" stroke-width="2.5"/><path d="M3 13L14 2" stroke="#ff0" stroke-width="1"/><rect x="13" y="1" width="2" height="2" fill="#f0f"/></svg>
<svg style="left:407px;top:46px" width="16" height="16" viewBox="0 0 16 16"><rect x="0.5" y="1.5" width="14" height="12" fill="#c0c0c0" stroke="#fff"/><path d="M15 2v12H1" stroke="#000" fill="none"/><path d="M3 4h3M3 7h4M3 10h3" stroke="#00f" stroke-width="1.3"/><path d="M10 4v7h2" stroke="#000" fill="none"/></svg>
<svg style="left:430px;top:46px" width="16" height="16" viewBox="0 0 16 16"><rect x="0.5" y="1.5" width="14" height="12" fill="#c0c0c0" stroke="#fff"/><path d="M15 2v12H1" stroke="#000" fill="none"/><path d="M3 4h3M3 7h2" stroke="#00f" stroke-width="1.3"/><rect x="5" y="8" width="9" height="4" fill="#f00"/></svg>
<svg style="left:453px;top:45px" width="18" height="17" viewBox="0 0 18 17"><path d="M4 3q-2 4 2 6M12 2l-4 12M16 3l-8 12" stroke="#fff" stroke-width="2" fill="none"/><path d="M4 2q-2 4 2 6M12 1l-4 12M16 2l-8 12" stroke="#a0a0a0" stroke-width="1.2" fill="none"/></svg>
<div style="left:312px;top:71px;width:3px;height:25px;box-shadow:inset 1px 1px #fff,inset -1px -1px #808080"></div>
<div style="left:316px;top:71px;width:3px;height:25px;box-shadow:inset 1px 1px #fff,inset -1px -1px #808080"></div>
<svg style="left:326px;top:75px" width="12" height="15" viewBox="0 0 12 15"><path d="M0.5 0.5h7l3 3v10h-10z" fill="#fff" stroke="#000"/></svg>
<svg style="left:346px;top:75px" width="17" height="15" viewBox="0 0 17 15"><path d="M0.5 4.5h4l1 1h6v8h-11z" fill="#ff8" stroke="#000"/><path d="M0.5 13.5l3-6h12l-4 6z" fill="#880" stroke="#000"/><path d="M10 3q2-3 5 0l-1 2" stroke="#000" fill="none"/></svg>
<svg style="left:369px;top:75px" width="17" height="16" viewBox="0 0 17 16"><circle cx="10" cy="9" r="6.5" fill="#b0b0b0" stroke="#808080"/><rect x="0.5" y="0.5" width="9" height="9" fill="#880" stroke="#000"/><rect x="2" y="1" width="6" height="3" fill="#c0c0c0"/><rect x="3" y="6" width="4" height="3" fill="#000"/></svg>
<div style="left:394px;top:72px;width:1px;height:24px;background:#808080"></div><div style="left:395px;top:72px;width:1px;height:24px;background:#fff"></div>
<svg style="left:400px;top:75px" width="17" height="15" viewBox="0 0 17 15"><path d="M4 1h8l1 4H3z" fill="#fff" stroke="#000"/><rect x="0.5" y="5.5" width="15" height="7" fill="#c0c0c0" stroke="#000"/><path d="M6 9h5" stroke="#ff0" stroke-width="2"/><path d="M2 13.5h12" stroke="#000"/></svg>
<svg style="left:423px;top:75px" width="17" height="16" viewBox="0 0 17 16"><path d="M0.5 0.5h7l3 3v10h-10z" fill="#fff" stroke="#000"/><circle cx="11" cy="10" r="3.5" fill="#0cf" stroke="#000"/><path d="M13 12l3 3" stroke="#000" stroke-width="2"/></svg>
<div style="left:448px;top:72px;width:1px;height:24px;background:#808080"></div><div style="left:449px;top:72px;width:1px;height:24px;background:#fff"></div>
<svg style="left:458px;top:75px" width="11" height="16" viewBox="0 0 11 16"><path d="M2 1l5 8M8 1l-5 8" stroke="#808080"/><circle cx="3" cy="12" r="2.5" fill="none" stroke="#808080"/><circle cx="8" cy="12" r="2.5" fill="none" stroke="#808080"/></svg>
<svg style="left:478px;top:75px" width="15" height="14" viewBox="0 0 15 14"><path d="M0.5 0.5h5l2 2v6h-7z" fill="#fff" stroke="#000"/><path d="M1.5 3h4M1.5 5h4" stroke="#000"/><path d="M6.5 5.5h5l2 2v6h-7z" fill="#fff" stroke="#000080"/><path d="M7.5 8h5M7.5 10h5M7.5 12h5" stroke="#000080"/></svg>
<svg style="left:501px;top:75px" width="17" height="16" viewBox="0 0 17 16"><rect x="0.5" y="2.5" width="12" height="12" rx="2" fill="#808080"/><rect x="8.5" y="8.5" width="7" height="6" fill="#c0c0c0" stroke="#fff"/><path d="M4 3h5" stroke="#c0c0c0"/></svg>
<div style="left:525px;top:72px;width:1px;height:24px;background:#808080"></div><div style="left:526px;top:72px;width:1px;height:24px;background:#fff"></div>
<svg style="left:532px;top:75px" width="16" height="16" viewBox="0 0 16 16"><path d="M4 6q4-5 9 0q1 3-1 6" stroke="#808080" fill="none" stroke-width="1.3"/><path d="M1 6l4-3v6z" fill="#808080"/><path d="M0 13h16" stroke="#808080" stroke-width="1.5"/></svg>
<svg style="left:552px;top:76px" width="10" height="14" viewBox="0 0 10 14"><path d="M5 0v7" stroke="#808080" stroke-width="2"/><path d="M1 6h8l-4 4z" fill="#808080"/><path d="M0 12.5h10" stroke="#808080" stroke-width="1.5"/></svg>
<svg style="left:567px;top:75px" width="17" height="16" viewBox="0 0 17 16"><path d="M12 6q-4-5-9 0q-1 3 1 6" stroke="#808080" fill="none" stroke-width="1.3"/><path d="M15 6l-4-3v6z" fill="#808080"/><path d="M0 13h16" stroke="#808080" stroke-width="1.5"/></svg>
<svg style="left:590px;top:76px" width="10" height="14" viewBox="0 0 10 14"><path d="M5 0v7" stroke="#808080" stroke-width="2"/><path d="M1 6h8l-4 4z" fill="#808080"/><path d="M0 12.5h10" stroke="#808080" stroke-width="1.5"/></svg>
<div style="left:607px;top:72px;width:1px;height:24px;background:#808080"></div><div style="left:608px;top:72px;width:1px;height:24px;background:#fff"></div>
<svg style="left:613px;top:76px" width="16" height="16" viewBox="0 0 16 16"><path d="M5 0.5h6l4.5 4.5v6L11 15.5H5L0.5 11V5z" fill="#e00" stroke="#800"/><text x="1.5" y="11" font-family="Liberation Sans" font-size="6.5" font-weight="bold" fill="#fff">STP</text></svg>
<div style="left:676px;top:71px;width:3px;height:25px;box-shadow:inset 1px 1px #fff,inset -1px -1px #808080"></div>
<div style="left:680px;top:71px;width:3px;height:25px;box-shadow:inset 1px 1px #fff,inset -1px -1px #808080"></div>
<svg style="left:688px;top:76px" width="15" height="16" viewBox="0 0 15 16"><rect x="0.5" y="0.5" width="13" height="12" fill="#ffffc0" stroke="#000"/><path d="M6 12.5l2 3v-3" fill="#fff" stroke="#000"/><text x="3" y="11" font-family="Liberation Sans" font-weight="bold" font-size="11" fill="#000080">?</text></svg>
<svg style="left:711px;top:76px" width="16" height="16" viewBox="0 0 16 16"><path d="M0.5 9.5l8-8.5l7 4l-8 8.5z" fill="#8000a0" stroke="#000"/><path d="M1 10l7 4l7.5-8v2L8 16 1 12z" fill="#fff" stroke="#000" stroke-width="0.8"/><path d="M1.5 9l7-7.5" stroke="#c060e0"/><text x="5" y="10" font-family="Liberation Sans" font-weight="bold" font-size="8" fill="#ff0">?</text></svg>
<svg style="left:733px;top:76px" width="17" height="16" viewBox="0 0 17 16"><path d="M1 1v12l3-3l3 5l2-1l-3-5h4z" fill="#000"/><text x="8" y="12" font-family="Liberation Sans" font-weight="bold" font-size="13" fill="#000080">?</text></svg>
<svg style="left:246px;top:212px" width="16" height="16" viewBox="0 0 16 16"><path d="M3 9a5 5 0 0 1 8-5" stroke="#000" stroke-width="2.5" fill="none"/><path d="M9 1l5 3l-5 3z" fill="#000"/><path d="M13 7a5 5 0 0 1-8 5" stroke="#000" stroke-width="2.5" fill="none"/><path d="M7 15l-5-3l5-3z" fill="#000"/></svg>
<svg style="left:269px;top:212px" width="17" height="16" viewBox="0 0 17 16"><rect x="0.5" y="3.5" width="10" height="11" fill="#c0c0c0" stroke="#808080"/><path d="M2 6h7M2 8h7M2 10h7M2 12h7" stroke="#808080"/><circle cx="12" cy="5" r="4" fill="#808080"/><path d="M2 15.5h10" stroke="#fff"/></svg>
<div style="left:293px;top:209px;width:1px;height:22px;background:#808080"></div><div style="left:294px;top:209px;width:1px;height:22px;background:#fff"></div>
<svg style="left:304px;top:212px" width="11" height="16" viewBox="0 0 11 16"><path d="M2 1l5 8M8 1l-5 8" stroke="#808080"/><circle cx="3" cy="12" r="2.5" fill="none" stroke="#808080"/><circle cx="8" cy="12" r="2.5" fill="none" stroke="#808080"/></svg>
<svg style="left:324px;top:212px" width="15" height="14" viewBox="0 0 15 14"><path d="M0.5 0.5h5l2 2v6h-7z" fill="#fff" stroke="#000"/><path d="M1.5 3h4M1.5 5h4" stroke="#000"/><path d="M6.5 5.5h5l2 2v6h-7z" fill="#fff" stroke="#000080"/><path d="M7.5 8h5M7.5 10h5M7.5 12h5" stroke="#000080"/></svg>
<svg style="left:347px;top:212px" width="17" height="16" viewBox="0 0 17 16"><rect x="0.5" y="2.5" width="12" height="12" rx="2" fill="#808080"/><rect x="8.5" y="8.5" width="7" height="6" fill="#c0c0c0" stroke="#fff"/><path d="M4 3h5" stroke="#c0c0c0"/></svg>
<div style="left:371px;top:209px;width:1px;height:22px;background:#808080"></div><div style="left:372px;top:209px;width:1px;height:22px;background:#fff"></div>
<svg style="left:379px;top:212px" width="13" height="14" viewBox="0 0 13 14"><rect x="0" y="0" width="13" height="14" fill="#000"/><rect x="1" y="1" width="11" height="12" fill="#880"/><rect x="3" y="1" width="7" height="5" fill="#c0c0c0"/><rect x="4" y="9" width="5" height="4" fill="#000"/><rect x="6" y="10" width="1" height="2" fill="#c0c0c0"/></svg>
<svg style="left:402px;top:212px" width="13" height="14" viewBox="0 0 13 14"><path d="M1 1l11 5l-4 1l4 5l-2 1l-4-5l-2 3z" fill="#000"/></svg>
<div style="left:424px;top:209px;width:1px;height:22px;background:#808080"></div><div style="left:425px;top:209px;width:1px;height:22px;background:#fff"></div>
<svg style="left:431px;top:212px" width="16" height="16" viewBox="0 0 16 16"><rect x="0.5" y="0.5" width="15" height="15" fill="none" stroke="#000" stroke-dasharray="1 1"/><circle cx="7" cy="7" r="3.5" fill="#fff" stroke="#000"/><path d="M9 9l3 3" stroke="#000" stroke-width="2"/></svg>
<svg style="left:456px;top:212px" width="12" height="16" viewBox="0 0 12 16"><circle cx="5" cy="5" r="3.5" fill="#fff" stroke="#000"/><path d="M7 7l4 4" stroke="#000" stroke-width="2"/><path d="M4 9v7M6 9v7" stroke="#000" stroke-dasharray="1 1"/></svg>
<svg style="left:477px;top:212px" width="16" height="16" viewBox="0 0 16 16"><circle cx="6.5" cy="6.5" r="5" fill="#fff" stroke="#000"/><path d="M4 6.5h5M6.5 4v5" stroke="#000" stroke-width="1.8"/><path d="M10 10l5 5" stroke="#000" stroke-width="2.2"/></svg>
<svg style="left:500px;top:212px" width="16" height="16" viewBox="0 0 16 16"><circle cx="6.5" cy="6.5" r="5" fill="#fff" stroke="#000"/><path d="M4 6.5h5" stroke="#000" stroke-width="1.8"/><path d="M10 10l5 5" stroke="#000" stroke-width="2.2"/></svg>
<svg style="left:527px;top:212px" width="12" height="16" viewBox="0 0 12 16"><rect x="1.5" y="0.5" width="8" height="6" rx="3" fill="#c0c0c0" stroke="#000"/><rect x="0.5" y="6.5" width="10" height="8" rx="2" fill="#c0c0c0" stroke="#000"/><path d="M3 9h5M3 11h5" stroke="#404040"/></svg>
<div style="left:548px;top:209px;width:1px;height:22px;background:#808080"></div><div style="left:549px;top:209px;width:1px;height:22px;background:#fff"></div>
<svg style="left:555px;top:212px" width="13" height="14" viewBox="0 0 13 14"><path d="M1 13L12 2" stroke="#000" stroke-width="2"/></svg>
<svg style="left:579px;top:212px" width="12" height="14" viewBox="0 0 12 14"><text x="0" y="13" font-family="Liberation Serif" font-weight="bold" font-size="15" fill="#000">A</text></svg>
<svg style="left:601px;top:212px" width="15" height="14" viewBox="0 0 15 14"><path d="M4.5 2.5h10l-4 5v4h-10v-5z" fill="#808080"/><path d="M0.5 11.5h10l4-4" stroke="#fff" fill="none"/></svg>
<!-- cover MDI bottom below 718 -->
<div style="left:0;top:719px;width:1024px;height:49px;background:#c0c0c0"></div>
<div class="hl" style="left:136px;top:718px;width:888px;background:#fff"></div>
<div class="hl" style="left:0;top:718px;width:136px;background:#fff"></div>
<!-- status bar -->
<div class="pane" style="left:0;top:721px;width:263px;height:17px"></div>
<div class="m" style="left:2px;top:725px">CODE V</div>
<div class="pane" style="left:264px;top:721px;width:92px;height:17px"></div>
<div class="m" style="left:266px;top:725px">DIM: Millimeter</div>
<div class="pane" style="left:358px;top:721px;width:246px;height:17px;overflow:hidden"></div>
<div class="m" style="left:360px;top:725px;width:244px;overflow:hidden">Apertures Used: User-Defined and Defaults</div>
<div class="pane" style="left:606px;top:721px;width:123px;height:17px"></div>
<div class="m" style="left:608px;top:725px">Use ZX Plane: No</div>
<div class="pane" style="left:731px;top:721px;width:237px;height:17px"></div>
<div class="m" style="left:733px;top:725px">Polarization Ray Tracing Active: No</div>
<!-- taskbar -->
<div class="hl" style="left:0;top:739px;width:1024px;background:#fff"></div>
<div class="btn" style="left:2px;top:742px;width:47px;height:22px"></div>
<div class="btn" style="left:54px;top:742px;width:160px;height:22px"></div>
<div class="btn" style="left:217px;top:742px;width:160px;height:22px"></div>
<div class="btn" style="left:380px;top:742px;width:160px;height:22px"></div>
<div class="dith" style="left:543px;top:742px;width:160px;height:22px;box-shadow:inset 1px 1px #000,inset -1px -1px #fff,inset 2px 2px #808080,inset -2px -2px #dfdfdf"></div>
<div class="m" style="left:78px;top:748px">help</div>
<div class="m" style="left:240px;top:748px">OCAD - Microsoft Vi...</div>
<div class="m" style="left:402px;top:748px">OCAD光学设计软件包...</div>
<div class="m" style="left:566px;top:749px">CODE V - dbgauss</div>
<div style="left:22px;top:745px;font-family:'Liberation Sans';font-size:12px;line-height:14px;white-space:pre">开始</div>
<div class="pane" style="left:961px;top:742px;width:61px;height:24px"></div>
<div class="m" style="left:984px;top:749px">11:57</div>
<div class="vl" style="left:907px;top:745px;height:20px;background:#808080"></div>
<div class="vl" style="left:908px;top:745px;height:20px;background:#fff"></div>
<div class="vl" style="left:935px;top:745px;height:20px;background:#808080"></div>
<div class="vl" style="left:936px;top:745px;height:20px;background:#fff"></div>

<svg style="left:4px;top:745px" width="16" height="14" viewBox="0 0 16 14"><path d="M2 1q3-1 6 1v5q-3-2-6-1z" fill="#f05010"/><path d="M9 2q3 2 6 0v5q-3 2-6 0z" fill="#60c020"/><path d="M1 7q3-1 6 1v5q-3-2-6-1z" fill="#3070f0"/><path d="M8 8q3 2 6 0v5q-3 2-6 0z" fill="#f8c800"/></svg>
<svg style="left:58px;top:746px" width="16" height="13" viewBox="0 0 16 13"><path d="M1 2.5q0-2 2-2h4l1.5 2h5q1.5 0 1.5 1.5v7q0 1.5-1.5 1.5h-11q-1.5 0-1.5-1.5z" fill="#f0d060" stroke="#b08010"/><path d="M2.5 5.5h12l-1 6h-11z" fill="#fff0a0" stroke="#c09020"/></svg>
<svg style="left:221px;top:745px" width="17" height="17" viewBox="0 0 17 17"><path d="M3 1l3 3" stroke="#080" stroke-width="2"/><path d="M0 5l4 2" stroke="#dd0" stroke-width="2"/><rect x="3.5" y="6.5" width="10" height="3" fill="#0cc" stroke="#000"/><rect x="3.5" y="9.5" width="9" height="6" fill="#fff" stroke="#000"/><path d="M5 12h2M9 12h2" stroke="#000"/><rect x="5" y="14" width="2" height="2" fill="#d00"/><path d="M14 15l3-2v2z" fill="#808080"/></svg>
<svg style="left:384px;top:745px" width="16" height="16" viewBox="0 0 16 16"><path d="M0.5 9.5l8-8.5l7 4l-8 8.5z" fill="#8000a0" stroke="#000"/><path d="M1 10l7 4l7.5-8v2L8 16 1 12z" fill="#fff" stroke="#000" stroke-width="0.8"/><path d="M1.5 9l7-7.5" stroke="#c060e0"/><text x="5" y="10" font-family="Liberation Sans" font-weight="bold" font-size="8" fill="#ff0">?</text></svg>
<svg style="left:548px;top:745px" width="16" height="16" viewBox="0 0 16 16"><rect x="0" y="0" width="16" height="16" fill="#0000ff"/><rect x="0" y="0" width="5" height="16" fill="#000080"/><path d="M3 2h12v2h-3v2H6V4H3z" fill="#fff"/><rect x="2" y="7" width="13" height="3" fill="#fff"/><path d="M5 13l3-2h3l3 2v3H5z" fill="#fff"/><rect x="0" y="13" width="5" height="3" fill="#000080"/></svg>
<svg style="left:887px;top:747px" width="17" height="14" viewBox="0 0 17 14"><path d="M7 0v3M9 1v2M11 0v3" stroke="#000"/><rect x="0.5" y="3.5" width="15" height="9" rx="2" fill="#fff" stroke="#000"/><path d="M2 6h12M2 8h12M2 10h12" stroke="#000" stroke-dasharray="1 1"/></svg>
<svg style="left:916px;top:746px" width="15" height="17" viewBox="0 0 15 17"><rect x="0.5" y="0.5" width="13" height="13" fill="#ffffc0" stroke="#000"/><path d="M6 13.5l2 3v-3" fill="#fff" stroke="#000"/><text x="3" y="12" font-family="Liberation Sans" font-weight="bold" font-size="12" fill="#000080">?</text></svg>
<svg style="left:942px;top:745px" width="10" height="18" viewBox="0 0 10 18"><rect x="3.5" y="0.5" width="6" height="4" fill="#fff" stroke="#000"/><rect x="0.5" y="3.5" width="6" height="4" fill="#fff" stroke="#000"/><path d="M1 12h8l-4 4z" fill="#000"/></svg>
<svg style="left:966px;top:750px" width="10" height="8" viewBox="0 0 10 8"><path d="M4 0.5L1 4l3 3.5M8 0.5L5 4l3 3.5" stroke="#000" stroke-width="1.6" fill="none"/></svg>
</body></html>
